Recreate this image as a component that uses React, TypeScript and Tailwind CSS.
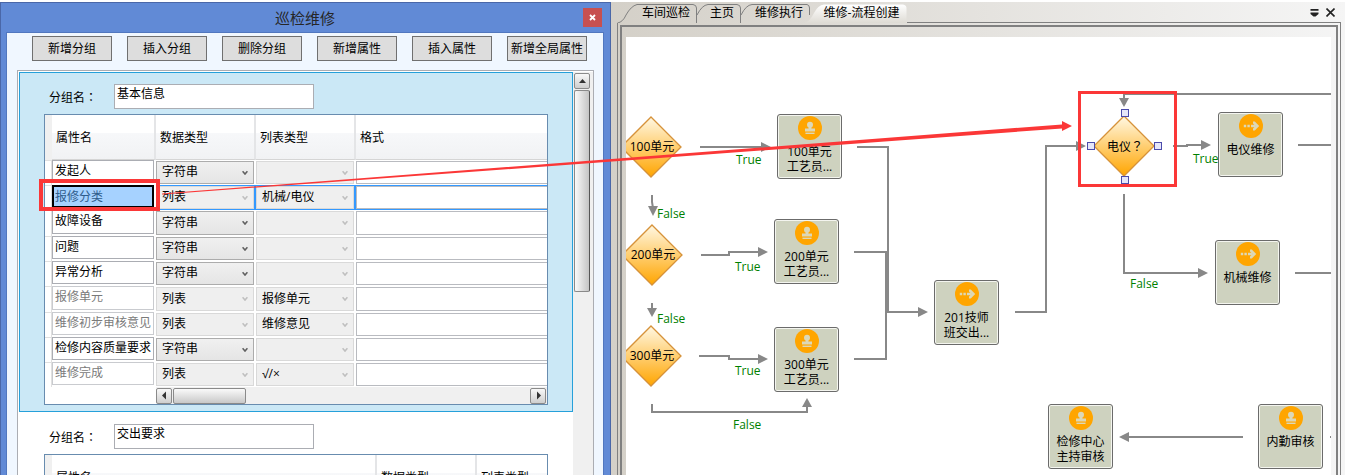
import React from "react";

type Field = {
  name: string;
  type: string;
  list: string;
  locked?: boolean;
  selected?: boolean;
};

const TOOLBAR = ["新增分组", "插入分组", "删除分组", "新增属性", "插入属性", "新增全局属性"];

const FIELDS: Field[] = [
  { name: "发起人", type: "字符串", list: "" },
  { name: "报修分类", type: "列表", list: "机械/电仪", locked: true, selected: true },
  { name: "故障设备", type: "字符串", list: "" },
  { name: "问题", type: "字符串", list: "" },
  { name: "异常分析", type: "字符串", list: "" },
  { name: "报修单元", type: "列表", list: "报修单元", locked: true },
  { name: "维修初步审核意见", type: "列表", list: "维修意见", locked: true },
  { name: "检修内容质量要求", type: "字符串", list: "" },
  { name: "维修完成", type: "列表", list: "√/×", locked: true },
];

function Picker({ label, value, active }: { label: string; value: string; active: boolean }) {
  return (
    <div className="relative h-full">
      <select
        aria-label={label}
        defaultValue={value}
        disabled={!active}
        className={
          "block h-full w-full appearance-none border pb-px pl-[5px] text-xs text-black opacity-100 outline-none " +
          (active
            ? "border-[#acacac] bg-linear-to-b from-[#f0f0f0] to-[#e5e5e5]"
            : "border-[#d9d9d9] bg-[#efefef]")
        }
      >
        <option value={value}>{value}</option>
      </select>
      <svg
        viewBox="0 0 6 5"
        className={
          "pointer-events-none absolute top-1/2 right-[6px] h-[5px] w-[6px] -translate-y-1/2 " +
          (active ? "text-[#606060]" : "text-[#bfbfbf]")
        }
      >
        <path d="M0.6 0.8 L3 3.6 L5.4 0.8" fill="none" stroke="currentColor" strokeWidth="1.5" />
      </svg>
    </div>
  );
}

function HeadCell({ children }: { children: React.ReactNode }) {
  return (
    <th className="border-r-2 border-b border-[#e4e5e7] border-b-[#d5d5d5] bg-linear-to-b from-white from-40% via-[#f7f8fa] via-40% to-[#f1f2f4] px-1 pt-[2px] pb-0 text-left font-normal last:border-r-0">
      {children}
    </th>
  );
}

function ScrollButton({ direction }: { direction: "up" | "left" | "right" }) {
  const shapes = { up: "M1 6 L4.5 2 L8 6 Z", left: "M6 0.5 L2 4.5 L6 8.5 Z", right: "M3 0.5 L7 4.5 L3 8.5 Z" };
  const labels = { up: "向上滚动", left: "向左滚动", right: "向右滚动" };
  return (
    <button
      aria-label={labels[direction]}
      className="flex h-4 w-4 shrink-0 items-center justify-center rounded-[2px] border border-[#8a8a8a] bg-linear-to-b from-[#f8f8f8] to-[#cfcfcf]"
    >
      <svg viewBox="0 0 9 9" className="h-[9px] w-[9px]">
        <path d={shapes[direction]} fill="#333" />
      </svg>
    </button>
  );
}

function GroupName({ id, value }: { id: string; value: string }) {
  return (
    <div className="flex pl-[29px]">
      <label htmlFor={id} className="w-[65px] pt-1 leading-[18px]">
        分组名<span className="font-['Noto_Sans_CJK_TC',sans-serif]">：</span>
      </label>
      <input
        id={id}
        defaultValue={value}
        className="h-[25px] w-[200px] border border-[#abadb3] bg-white px-[2px] pb-[8px] text-xs leading-4 outline-none"
      />
    </div>
  );
}

function FieldRow({ field }: { field: Field }) {
  const edge = field.selected ? "border-[#3399ff]" : "border-transparent";
  return (
    <tr className="h-[25px] nth-3:h-[26px] nth-6:h-[26px]">
      <td className="border-t border-r border-[#e0e0e0] bg-white" />
      <td className="h-px p-0 pr-[2px] pb-[2px]">
        <input
          aria-label="属性名"
          defaultValue={field.name}
          className={
            "block h-full w-full border text-xs leading-4 outline-none " +
            (field.selected
              ? "border-2 border-black bg-[#a6d2ff] px-px pb-[2px] text-[#2f5d8c]"
              : field.locked
                ? "border-[#c9cbcf] bg-white px-[2px] pb-1 text-[#7a7a7a]"
                : "border-[#abadb3] bg-white px-[2px] pb-1 text-black")
          }
        />
      </td>
      <td className={"h-px border-y border-r-2 p-0 " + edge}>
        <Picker label="数据类型" value={field.type} active={!field.locked} />
      </td>
      <td className={"h-px border-y border-r-2 p-0 " + edge}>
        <Picker label="列表类型" value={field.list} active={false} />
      </td>
      <td className={"h-px border-y p-0 " + edge}>
        <input
          aria-label="格式"
          className="block h-full w-full border border-r-0 border-[#b9bbc0] bg-white px-[2px] text-xs outline-none"
        />
      </td>
    </tr>
  );
}

function EditorWindow() {
  return (
    <section className="flex w-[611px] shrink-0 flex-col border border-b-0 border-[#4a67a8] bg-[#618ad6] pr-[6px] pl-[5px]">
      <header className="relative flex h-[29px] shrink-0 items-center justify-center text-[15px] text-[#262626]">
        <h1>巡检维修</h1>
        <button
          aria-label="关闭"
          className="absolute top-[5px] right-[2px] flex h-[19px] w-[19px] items-center justify-center bg-[#c75050]"
        >
          <svg viewBox="0 0 7 7" className="h-[7px] w-[7px]">
            <path d="M1 1 L6 6 M6 1 L1 6" stroke="#fff" strokeWidth="1.8" />
          </svg>
        </button>
      </header>

      <div className="flex min-h-0 flex-1 flex-col border border-b-0 border-[#5177bf] bg-[#f0f7ff] pr-[9px] pl-[10px]">
        <div className="flex shrink-0 gap-[15px] pt-[3px] pr-[5px] pb-[9px] pl-[15px]">
          {TOOLBAR.map((label) => (
            <button
              key={label}
              className="h-[25px] w-20 shrink-0 border border-[#707070] bg-[#dddddd] text-xs whitespace-nowrap"
            >
              {label}
            </button>
          ))}
        </div>

        <div className="flex min-h-0 flex-1 border border-b-0 border-[#abadb3] bg-white pt-px pl-px">
          <div className="flex min-w-0 flex-1 flex-col">
            <div className="shrink-0 border border-[#26a0da] bg-[#cbe8f6] pt-[11px] pb-[6px]">
              <GroupName id="group-basic" value="基本信息" />
              <div className="mt-[5px] mr-6 ml-6 border border-[#688caf] bg-white">
                <table className="w-full table-fixed border-separate border-spacing-0 text-xs">
                  <colgroup>
                    <col className="w-[7px]" />
                    <col className="w-[104px]" />
                    <col className="w-[100px]" />
                    <col className="w-[100px]" />
                    <col />
                  </colgroup>
                  <thead>
                    <tr className="h-[45px]">
                      <td className="bg-[#f0f0f0]" />
                      <HeadCell>属性名</HeadCell>
                      <HeadCell>数据类型</HeadCell>
                      <HeadCell>列表类型</HeadCell>
                      <HeadCell>格式</HeadCell>
                    </tr>
                  </thead>
                  <tbody>
                    {FIELDS.map((field) => (
                      <FieldRow key={field.name} field={field} />
                    ))}
                  </tbody>
                </table>
                <div className="flex pl-[111px]">
                  <div className="flex h-[17px] flex-1 items-center bg-[#f0f0f0] pr-px">
                    <ScrollButton direction="left" />
                    <div className="ml-px h-4 w-[73px] rounded-[2px] border border-[#8a8a8a] bg-linear-to-b from-[#fafafa] to-[#c9c9c9]" />
                    <div className="flex-1" />
                    <ScrollButton direction="right" />
                  </div>
                </div>
              </div>
            </div>

            <div className="shrink-0 border border-transparent pt-[11px]">
              <GroupName id="group-request" value="交出要求" />
              <div className="mt-[5px] mr-6 ml-6 border border-[#688caf] bg-white">
                <table className="w-full table-fixed border-separate border-spacing-0 text-xs">
                  <colgroup>
                    <col className="w-[7px]" />
                    <col className="w-[325px]" />
                    <col className="w-[100px]" />
                    <col />
                  </colgroup>
                  <thead>
                    <tr className="h-[45px]">
                      <td className="bg-[#f0f0f0]" />
                      <HeadCell>属性名</HeadCell>
                      <HeadCell>数据类型</HeadCell>
                      <HeadCell>列表类型</HeadCell>
                    </tr>
                  </thead>
                </table>
              </div>
            </div>
          </div>

          <div className="flex w-5 shrink-0 flex-col items-start bg-[#f0f0f0] pt-px pl-px">
            <ScrollButton direction="up" />
            <div className="mt-px h-[202px] w-4 shrink-0 rounded-[2px] border border-[#8a8a8a] border-r-[#555] bg-linear-to-r from-[#fafafa] to-[#c4c4c4]" />
          </div>
        </div>
      </div>
    </section>
  );
}

type Step = { x: number; y: number; kind: "stamp" | "forward"; lines: string[] };

const STEPS: Step[] = [
  { x: 151, y: 77, kind: "stamp", lines: ["100单元", "工艺员..."] },
  { x: 148, y: 182, kind: "stamp", lines: ["200单元", "工艺员..."] },
  { x: 148, y: 290, kind: "stamp", lines: ["300单元", "工艺员..."] },
  { x: 308, y: 243, kind: "forward", lines: ["201技师", "班交出..."] },
  { x: 592, y: 75, kind: "forward", lines: ["电仪维修"] },
  { x: 589, y: 203, kind: "forward", lines: ["机械维修"] },
  { x: 422, y: 367, kind: "stamp", lines: ["检修中心", "主持审核"] },
  { x: 632, y: 367, kind: "stamp", lines: ["内勤审核"] },
];

const DECISIONS = [
  { x: 25, y: 110, label: "100单元", mark: "" },
  { x: 26, y: 218, label: "200单元", mark: "" },
  { x: 25, y: 319, label: "300单元", mark: "" },
  { x: 498, y: 109, label: "电仪", mark: "？" },
];

const BRANCH_LABELS = [
  { x: 110, y: 114, text: "True" },
  { x: 31, y: 168, text: "False" },
  { x: 109, y: 221, text: "True" },
  { x: 31, y: 273, text: "False" },
  { x: 109, y: 325, text: "True" },
  { x: 107, y: 379, text: "False" },
  { x: 567, y: 113, text: "True" },
  { x: 504, y: 238, text: "False" },
];

const CONNECTORS = [
  "M74 110 H136",
  "M26 158 V165 L27 171",
  "M75 218 H103 V215 H133",
  "M26 266 V273",
  "M73 319 H103 V322 H133",
  "M26 367 V375 H181 V369",
  "M231 110 H262 V275 H293",
  "M228 215 H260 V275",
  "M228 322 H260 V275",
  "M389 275 H420 V109 H451",
  "M547 109 H561 V108 H576",
  "M498 157 V236 H573",
  "M720 57 H498 V63",
  "M672 108 H720",
  "M669 236 H720",
  "M704 400 H720",
  "M617 400 H503",
];

const ARROW_HEADS = [
  "M135 105 L145 110 L135 115 Z",
  "M22 169 L32 169 L27 179 Z",
  "M132 210 L142 215 L132 220 Z",
  "M21 271 L31 271 L26 280 Z",
  "M132 317 L142 322 L132 327 Z",
  "M176 370 L186 370 L181 361 Z",
  "M292 270 L302 275 L292 280 Z",
  "M450 104 L460 109 L450 114 Z",
  "M575 103 L585 108 L575 113 Z",
  "M572 231 L582 236 L572 241 Z",
  "M493 61 L503 61 L498 70 Z",
  "M503 395 L493 400 L503 405 Z",
];

function StepIcon({ kind }: { kind: Step["kind"] }) {
  return (
    <svg viewBox="0 0 24 24" className="h-6 w-6 shrink-0">
      <circle cx="12" cy="12" r="12" fill="#ffa500" />
      {kind === "stamp" ? (
        <g fill="#dcd8b8">
          <circle cx="12" cy="8.8" r="3" />
          <path d="M10.6 10.5 H13.4 V12.6 H17 V15.6 H7 V12.6 H10.6 Z" />
          <path d="M7.5 16.6 H16.5 V18 H7.5 Z" />
        </g>
      ) : (
        <g fill="#dcd8b8">
          <path d="M4.8 10.8 H7.2 V13.2 H4.8 Z M8.4 10.8 H10.8 V13.2 H8.4 Z M12 10.8 H16 V13.2 H12 Z" />
          <path d="M14 7.4 H15.8 L20.2 12 L15.8 16.6 H14 V14.6 L16.4 12 L14 9.4 Z" />
        </g>
      )}
    </svg>
  );
}

function FlowCanvas() {
  return (
    <div className="relative min-h-0 flex-1 overflow-hidden bg-white">
      <svg className="absolute inset-0 h-full w-full">
        <defs>
          <linearGradient id="amber" x1="0" y1="0" x2="0" y2="1">
            <stop offset="0" stopColor="#fff8e4" />
            <stop offset="1" stopColor="#ffa500" />
          </linearGradient>
        </defs>
        <g fill="none" stroke="#888888" strokeWidth="2">
          {CONNECTORS.map((d) => (
            <path key={d} d={d} />
          ))}
        </g>
        <g fill="#888888">
          {ARROW_HEADS.map((d) => (
            <path key={d} d={d} />
          ))}
        </g>
        {DECISIONS.map(({ x, y, label }) => (
          <path
            key={label}
            d={`M${x} ${y - 30} L${x + 30} ${y} L${x} ${y + 30} L${x - 30} ${y} Z`}
            fill="url(#amber)"
            stroke="#d6923a"
            strokeWidth="1.3"
          />
        ))}
        <g fill="#e6e6fa" stroke="#4b4bab">
          <rect x="495.5" y="72.5" width="7" height="7" />
          <rect x="461.5" y="105.5" width="7" height="7" />
          <rect x="528.5" y="105.5" width="7" height="7" />
          <rect x="495.5" y="139.5" width="7" height="7" />
        </g>
      </svg>

      {DECISIONS.map(({ x, y, label, mark }) => (
        <span
          key={label}
          className="absolute -translate-x-1/2 -translate-y-1/2 text-xs leading-4 whitespace-nowrap"
          style={{ left: x + 1, top: y }}
        >
          {label}
          {mark && <span className="font-['Noto_Sans_CJK_TC',sans-serif]">{mark}</span>}
        </span>
      ))}

      {BRANCH_LABELS.map(({ x, y, text }) => (
        <span key={`${x}-${y}`} className="absolute text-xs leading-[18px] text-[#008000]" style={{ left: x, top: y }}>
          {text}
        </span>
      ))}

      {STEPS.map(({ x, y, kind, lines }) => (
        <div
          key={`${x}-${y}`}
          className="absolute flex h-[65px] w-[65px] flex-col items-center rounded-[3px] border border-[#6b6b6b] bg-[#ced2bf] pt-px text-xs leading-[15px] whitespace-nowrap inset-ring inset-ring-[#f4f5ef]"
          style={{ left: x, top: y }}
        >
          <StepIcon kind={kind} />
          <div className="pt-1 text-center">
            {lines.map((line) => (
              <p key={line}>{line}</p>
            ))}
          </div>
        </div>
      ))}
    </div>
  );
}

function Workspace() {
  return (
    <main className="flex min-w-0 flex-1 flex-col bg-linear-to-r from-[#d4d0c8] to-[#f5f5f5] pt-px pr-1 pl-[6px]">
      <nav className="relative flex h-5 shrink-0 text-xs leading-5">
        <svg viewBox="0 0 290 20" className="absolute top-0 left-0 h-5 w-[290px]">
          <defs>
            <linearGradient id="tab" x1="0" y1="0" x2="0" y2="1">
              <stop offset="0" stopColor="#ffffff" />
              <stop offset="1" stopColor="#dedbd4" />
            </linearGradient>
          </defs>
          <g fill="none" stroke="#808080">
            <path d="M0.5 20 Q6 19 9 12 Q14 3 20 1.5 H76 Q79.5 2 79.5 5 V20" />
            <path d="M80 12 Q85 2 91 1.5 H120 Q123.5 2 123.5 5 V20" />
            <path d="M124 12 Q129 2 135 1.5 H190 Q192.5 2 192.5 5 V12" />
          </g>
          <path d="M188 20 Q193 18 197 10 Q201 2 207 1.5 H286 Q289.5 2 289.5 5 V20 Z" fill="url(#tab)" />
        </svg>
        <button className="relative w-20 pl-[18px]">车间巡检</button>
        <button className="relative w-11 pl-[6px]">主页</button>
        <button className="relative w-[72px] pl-1">维修执行</button>
        <button className="relative w-[94px] pl-[3px]">维修-流程创建</button>
        <div className="flex flex-1 items-center justify-end gap-[7px] border-b border-[#808080] pr-[6px]">
          <button aria-label="窗口列表">
            <svg viewBox="0 0 9 9" className="block h-[9px] w-[9px]">
              <path d="M0.5 1 H8.5 V2.8 H0.5 Z M0.5 4.6 H8.5 V6 L5.5 8.6 H3.5 L0.5 6 Z" fill="#222" />
            </svg>
          </button>
          <button aria-label="关闭页签">
            <svg viewBox="0 0 9 9" className="block h-[9px] w-[9px]">
              <path d="M0.5 0.5 L8.5 8.5 M8.5 0.5 L0.5 8.5" stroke="#222" strokeWidth="1.6" />
            </svg>
          </button>
        </div>
      </nav>
      <div className="flex min-h-0 flex-1 flex-col border-x border-[#808080] px-[2px] pt-[2px]">
        <div className="flex min-h-0 flex-1 flex-col border-2 border-b-0 border-[#808080] pt-[10px] pr-[5px] pl-1">
          <FlowCanvas />
        </div>
      </div>
    </main>
  );
}

function Annotations() {
  return (
    <svg className="pointer-events-none absolute inset-0 h-full w-full" fill="none" stroke="#fb3737">
      <rect x="41" y="181" width="117" height="28" strokeWidth="4" />
      <rect x="1079.5" y="92.5" width="96" height="93" strokeWidth="3" />
      <path
        d="M162 193.5 L1062 124.5 L1062 121 L1072 126 L1062 131 L1062 128.5 L162 194.5 Z"
        fill="#fb3737"
        stroke="none"
      />
    </svg>
  );
}

export default function App() {
  return (
    <div className="relative flex h-screen overflow-hidden bg-white pt-[2px] font-['Open_Sans','Noto_Sans_CJK_SC',sans-serif] text-xs text-black">
      <EditorWindow />
      <Workspace />
      <Annotations />
    </div>
  );
}
